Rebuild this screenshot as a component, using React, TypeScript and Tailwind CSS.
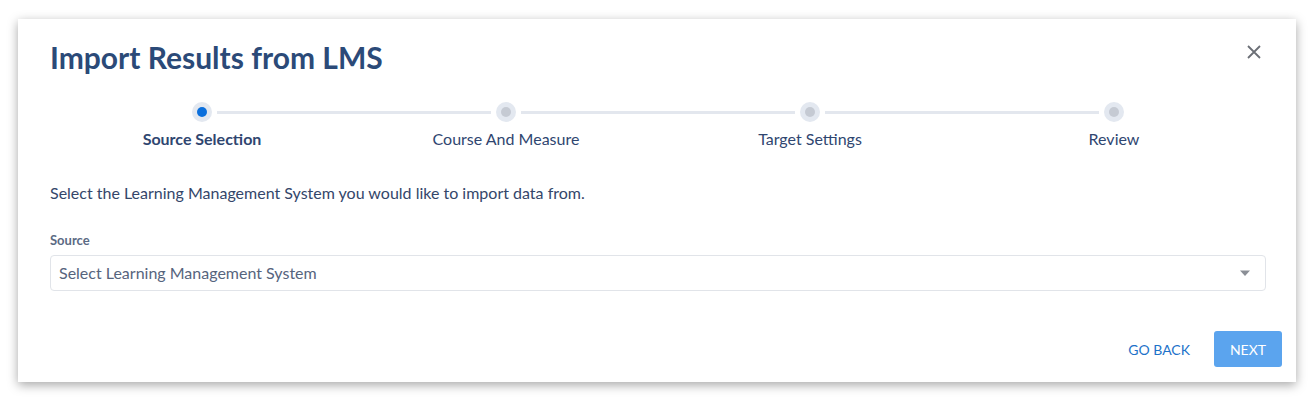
import React from "react";

const steps = ["Source Selection", "Course And Measure", "Target Settings", "Review"];

export default function App() {
  return (
    <div className="w-[1316px] h-[405px] bg-white pt-[19px] pl-[18px]" style={{ fontFamily: "Lato, 'Noto Sans', sans-serif" }}>
      <div className="relative w-[1278px] h-[363px] bg-white shadow-[0_3px_10px_rgba(0,0,0,0.35)] px-[32px] pt-[21px]">
        <button className="absolute right-[34px] top-[25px] text-[#6b6f76]">
          <svg width="16" height="16" viewBox="0 0 16 16" fill="none" stroke="currentColor" strokeWidth="1.8">
            <path d="M2 2 L14 14 M14 2 L2 14" />
          </svg>
        </button>
        <h1 className="text-[30px] leading-[34px] font-bold text-[#2b4a78]">Import Results from LMS</h1>
        <div className="mt-[28px] grid grid-cols-4 w-[1216px]">
          {steps.map((s, i) => (
            <div key={s} className="relative flex flex-col items-center">
              {i < steps.length - 1 && (
                <div className="absolute top-[9px] left-[167px] w-[274px] h-[3px] bg-[#e3e7ee]" />
              )}
              <div className="w-[20px] h-[20px] rounded-full bg-[#e3e8f0] flex items-center justify-center">
                <div className={i === 0 ? "w-[10px] h-[10px] rounded-full bg-[#0b6fdc]" : "w-[10px] h-[10px] rounded-full bg-[#c5cad3]"} />
              </div>
              <div className={i === 0 ? "mt-[7px] text-[16px] leading-[20px] font-bold text-[#2f4670]" : "mt-[7px] text-[16px] leading-[20px] text-[#2f4670]"}>{s}</div>
            </div>
          ))}
        </div>
        <p className="mt-[34px] text-[16px] leading-[20px] text-[#34466a]">Select the Learning Management System you would like to import data from.</p>
        <div className="mt-[29px] text-[13px] leading-[16px] font-bold text-[#5b6a84]">Source</div>
        <div className="mt-[7px] w-[1216px] h-[36px] border border-[#e1e4e9] rounded-[4px] flex items-center justify-between pl-[8px] pr-[14px]">
          <span className="text-[16px] text-[#56647d]">Select Learning Management System</span>
          <svg width="12" height="7" viewBox="0 0 12 7"><path d="M1 0.5 L11 0.5 L6 6 Z" fill="#8b8f96" /></svg>
        </div>
        <div className="absolute right-[14px] bottom-[15px] flex items-center gap-[24px]">
          <button className="text-[14px] text-[#1d72c9] px-[0px]">GO BACK</button>
          <button className="w-[68px] h-[36px] rounded-[3px] bg-[#5ba4ee] text-white text-[14px]">NEXT</button>
        </div>
      </div>
    </div>
  );
}
